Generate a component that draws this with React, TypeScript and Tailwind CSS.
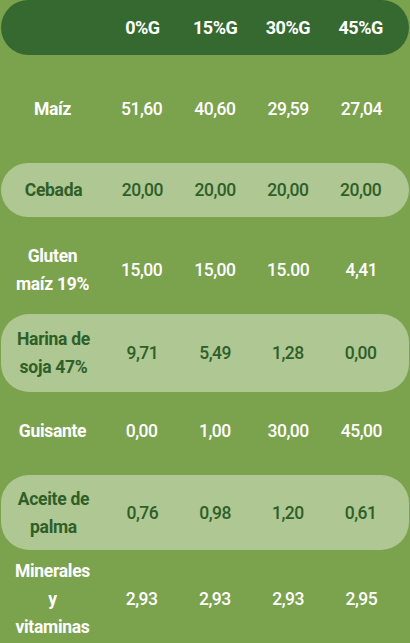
const rows = [
  { label: ["Maíz"], values: ["51,60", "40,60", "29,59", "27,04"], pill: false, h: "h-[108px]" },
  { label: ["Cebada"], values: ["20,00", "20,00", "20,00", "20,00"], pill: true, h: "h-[54px]" },
  { label: ["Gluten", "maíz 19%"], values: ["15,00", "15,00", "15.00", "4,41"], pill: false, h: "h-[97px] pt-[9px]" },
  { label: ["Harina de", "soja 47%"], values: ["9,71", "5,49", "1,28", "0,00"], pill: true, h: "h-[78px]" },
  { label: ["Guisante"], values: ["0,00", "1,00", "30,00", "45,00"], pill: false, h: "h-[83px] pb-[6px]" },
  { label: ["Aceite de", "palma"], values: ["0,76", "0,98", "1,20", "0,61"], pill: true, h: "h-[75px]" },
  { label: ["Minerales", "y", "vitaminas"], values: ["2,93", "2,93", "2,93", "2,95"], pill: false, h: "h-[94px] pt-[3px]" },
];

const font = { fontFamily: 'Roboto, "DejaVu Sans Condensed", sans-serif' };

export default function App() {
  return (
    <div className="h-[643px] w-[410px] overflow-hidden bg-[#7BA24D]" style={font}>
      <div className="mx-[1px] grid h-[55px] grid-cols-[105px_1fr_1fr_1fr_1fr] items-center rounded-full bg-[#35692F] pr-[12px] text-[18px] font-bold tracking-[-0.5px] text-white">
        <div />
        <div className="text-center">0%G</div>
        <div className="text-center">15%G</div>
        <div className="text-center">30%G</div>
        <div className="text-center">45%G</div>
      </div>
      {rows.map((r, i) => (
        <div
          key={i}
          className={`grid grid-cols-[105px_1fr_1fr_1fr_1fr] items-center pr-[12px] ${r.h} ${
            r.pill ? "ml-[1px] mr-[1px] rounded-[28px] bg-[#AFC792] text-[#2E5F29]" : "text-white"
          }`}
        >
          <div className="text-center text-[17.5px] font-bold leading-[28px] tracking-[-0.3px]">
            {r.label.map((l) => (
              <div key={l}>{l}</div>
            ))}
          </div>
          {r.values.map((v, j) => (
            <div key={j} className="text-center text-[17.5px] font-medium leading-[28px] tracking-[-0.5px]">
              {v}
            </div>
          ))}
        </div>
      ))}
    </div>
  );
}
